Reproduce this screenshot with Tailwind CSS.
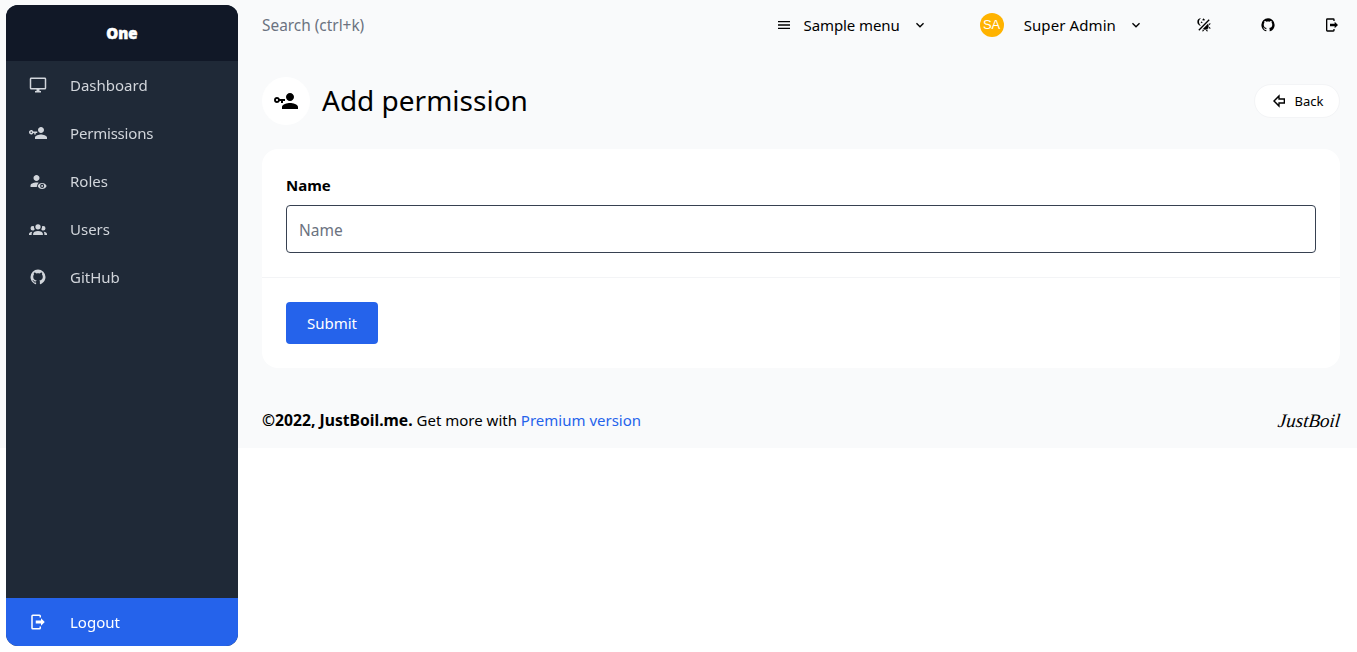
<!DOCTYPE html>
<html lang="en">
<head>
    <meta charset="UTF-8">
    <meta name="viewport" content="width=device-width, initial-scale=1.0">
    <title>Add permission</title>
    <script src="https://cdn.jsdelivr.net/npm/@tailwindcss/browser@4"></script>
</head>
<body class="bg-white min-h-screen font-['Noto_Sans',sans-serif] text-black">
    <!-- Sidebar -->
    <aside class="fixed left-[6px] top-[5px] bottom-[6px] w-[232px] bg-[#1f2937] rounded-xl overflow-hidden flex flex-col">
        <div class="h-14 shrink-0 bg-[#111827] flex items-center justify-center text-white font-black text-[15px] [-webkit-text-stroke:0.5px_white]">One</div>
        <nav class="flex-1 text-[#d1d5db] text-[15px]">
            <a href="#" class="h-12 flex items-center">
                <span class="w-16 flex justify-center"><svg class="w-[18px] h-[18px]" viewBox="0 0 24 24" fill="currentColor"><path d="M21,16H3V4H21M21,2H3C1.89,2 1,2.89 1,4V16A2,2 0 0,0 3,18H10V20H8V22H16V20H14V18H21A2,2 0 0,0 23,16V4C23,2.89 22.1,2 21,2Z"/></svg></span>
                <span>Dashboard</span>
            </a>
            <a href="#" class="h-12 flex items-center">
                <span class="w-16 flex justify-center"><svg class="w-[18px] h-[18px]" viewBox="0 0 24 24" fill="currentColor"><path d="M11 10V12H9V14H7V12H5.8C5.4 13.2 4.3 14 3 14C1.3 14 0 12.7 0 11S1.3 8 3 8C4.3 8 5.4 8.8 5.8 10H11M3 10C2.4 10 2 10.4 2 11S2.4 12 3 12 4 11.6 4 11 3.6 10 3 10M16 14C18.7 14 24 15.3 24 18V20H8V18C8 15.3 13.3 14 16 14M16 12C13.8 12 12 10.2 12 8S13.8 4 16 4 20 5.8 20 8 18.2 12 16 12Z"/></svg></span>
                <span class="tracking-[-0.2px]">Permissions</span>
            </a>
            <a href="#" class="h-12 flex items-center">
                <span class="w-16 flex justify-center"><svg class="w-[18px] h-[18px]" viewBox="0 0 24 24" fill="currentColor"><path d="M10 4C7.79 4 6 5.79 6 8S7.79 12 10 12 14 10.21 14 8 12.21 4 10 4M10 14C5.58 14 2 15.79 2 18V20H10.4C10.6 17.5 11.7 15.6 13.1 14.22 12.2 14.08 11.13 14 10 14Z"/><path fill-rule="evenodd" d="M17.5 14.5c-2.7 0-5 1.7-6 4 1 2.3 3.3 4 6 4s5-1.7 6-4c-1-2.3-3.3-4-6-4zm0 6.7a2.7 2.7 0 1 1 0-5.4 2.7 2.7 0 0 1 0 5.4zm0-4a1.3 1.3 0 1 0 0 2.6 1.3 1.3 0 0 0 0-2.6z"/></svg></span>
                <span>Roles</span>
            </a>
            <a href="#" class="h-12 flex items-center">
                <span class="w-16 flex justify-center"><svg class="w-[18px] h-[18px]" viewBox="0 0 24 24" fill="currentColor"><path d="M12,5.5A3.5,3.5 0 0,1 15.5,9A3.5,3.5 0 0,1 12,12.5A3.5,3.5 0 0,1 8.5,9A3.5,3.5 0 0,1 12,5.5M5,8C5.56,8 6.08,8.15 6.53,8.42C6.38,9.85 6.8,11.27 7.66,12.38C7.16,13.34 6.16,14 5,14A3,3 0 0,1 2,11A3,3 0 0,1 5,8M19,8A3,3 0 0,1 22,11A3,3 0 0,1 19,14C17.84,14 16.84,13.34 16.34,12.38C17.2,11.27 17.62,9.85 17.47,8.42C17.92,8.15 18.44,8 19,8M5.5,18.25C5.5,16.18 8.41,14.5 12,14.5C15.59,14.5 18.5,16.18 18.5,18.25V20H5.5V18.25M0,20V18.5C0,17.11 1.89,15.94 4.45,15.6C3.86,16.28 3.5,17.22 3.5,18.25V20H0M24,20H20.5V18.25C20.5,17.22 20.14,16.28 19.55,15.6C22.11,15.94 24,17.11 24,18.5V20Z"/></svg></span>
                <span>Users</span>
            </a>
            <a href="#" class="h-12 flex items-center">
                <span class="w-16 flex justify-center"><svg class="w-[18px] h-[18px]" viewBox="0 0 24 24" fill="currentColor"><path d="M12,2A10,10 0 0,0 2,12C2,16.42 4.87,20.17 8.84,21.5C9.34,21.58 9.5,21.27 9.5,21C9.5,20.77 9.5,20.14 9.5,19.31C6.73,19.91 6.14,17.97 6.14,17.97C5.68,16.81 5.03,16.5 5.03,16.5C4.12,15.88 5.1,15.9 5.1,15.9C6.1,15.97 6.63,16.93 6.63,16.93C7.5,18.45 8.97,18 9.54,17.76C9.63,17.11 9.89,16.67 10.17,16.42C7.95,16.17 5.62,15.31 5.62,11.5C5.62,10.39 6,9.5 6.65,8.79C6.55,8.54 6.2,7.5 6.75,6.15C6.75,6.15 7.59,5.88 9.5,7.17C10.29,6.95 11.15,6.84 12,6.84C12.85,6.84 13.71,6.95 14.5,7.17C16.41,5.88 17.25,6.15 17.25,6.15C17.8,7.5 17.45,8.54 17.35,8.79C18,9.5 18.38,10.39 18.38,11.5C18.38,15.32 16.04,16.16 13.81,16.41C14.17,16.72 14.5,17.33 14.5,18.26C14.5,19.6 14.5,20.68 14.5,21C14.5,21.27 14.66,21.59 15.17,21.5C19.14,20.16 22,16.42 22,12A10,10 0 0,0 12,2Z"/></svg></span>
                <span>GitHub</span>
            </a>
        </nav>
        <a href="#" class="h-12 shrink-0 flex items-center bg-[#2563eb] text-white text-[15px]">
            <span class="w-16 flex justify-center"><svg class="w-[18px] h-[18px]" viewBox="0 0 24 24" fill="currentColor"><path d="M16,17V14H9V10H16V7L21,12L16,17M14,2A2,2 0 0,1 16,4V6H14V4H5V20H14V18H16V20A2,2 0 0,1 14,22H5A2,2 0 0,1 3,20V4A2,2 0 0,1 5,2H14Z"/></svg></span>
            <span>Logout</span>
        </a>
    </aside>

    <!-- Main -->
    <div class="bg-[#f9fafb] pl-[238px] h-[448px] flex flex-col">
        <header class="h-[50px] flex items-center justify-between pl-6 pr-[17px]">
            <span class="text-[15.4px] text-[#6b7280] mt-0.5">Search (ctrl+k)</span>
            <div class="flex items-center text-[15px]">
                <svg class="w-4 h-4" viewBox="0 0 24 24" fill="currentColor"><path d="M3,6H21V8H3V6M3,11H21V13H3V11M3,16H21V18H3V16Z"/></svg>
                <span class="ml-3 tracking-[-0.1px]">Sample menu</span>
                <svg class="ml-3 w-4 h-4" viewBox="0 0 24 24" fill="currentColor"><path d="M7.41,8.58L12,13.17L16.59,8.58L18,10L12,16L6,10L7.41,8.58Z"/></svg>
                <span class="ml-[52px] w-6 h-6 rounded-full bg-[#ffb300] text-white text-[13px] font-['Liberation_Sans',sans-serif] flex items-center justify-center">SA</span>
                <span class="ml-5 tracking-[0.1px]">Super Admin</span>
                <svg class="ml-3 w-4 h-4" viewBox="0 0 24 24" fill="currentColor"><path d="M7.41,8.58L12,13.17L16.59,8.58L18,10L12,16L6,10L7.41,8.58Z"/></svg>
                <svg class="ml-[52px] w-4 h-4" viewBox="0 0 24 24" fill="currentColor"><path d="M7.5,2C5.71,3.15 4.5,5.18 4.5,7.5C4.5,9.82 5.71,11.85 7.53,13C4.46,13 2,10.54 2,7.5A5.5,5.5 0 0,1 7.5,2M19.07,3.5L20.5,4.93L4.93,20.5L3.5,19.07L19.07,3.5M12.89,5.93L11.41,5L9.97,6L10.39,4.3L9,3.24L10.75,3.12L11.33,1.47L12,3.1L13.73,3.13L12.38,4.26L12.89,5.93M9.59,9.54L8.43,8.81L7.31,9.59L7.65,8.27L6.56,7.44L7.92,7.35L8.37,6.06L8.88,7.33L10.24,7.35L9.19,8.23L9.59,9.54M19,13.5A5.5,5.5 0 0,1 13.5,19C12.28,19 11.15,18.6 10.24,17.93L17.93,10.24C18.6,11.15 19,12.28 19,13.5M14.6,20.08L17.37,18.93L17.13,22.28L14.6,20.08M18.93,17.38L20.08,14.61L22.28,17.15L18.93,17.38M20.08,12.42L18.94,9.64L22.28,9.88L20.08,12.42M9.63,18.93L12.4,20.08L9.87,22.27L9.63,18.93Z"/></svg>
                <svg class="ml-12 w-4 h-4" viewBox="0 0 24 24" fill="currentColor"><path d="M12,2A10,10 0 0,0 2,12C2,16.42 4.87,20.17 8.84,21.5C9.34,21.58 9.5,21.27 9.5,21C9.5,20.77 9.5,20.14 9.5,19.31C6.73,19.91 6.14,17.97 6.14,17.97C5.68,16.81 5.03,16.5 5.03,16.5C4.12,15.88 5.1,15.9 5.1,15.9C6.1,15.97 6.63,16.93 6.63,16.93C7.5,18.45 8.97,18 9.54,17.76C9.63,17.11 9.89,16.67 10.17,16.42C7.95,16.17 5.62,15.31 5.62,11.5C5.62,10.39 6,9.5 6.65,8.79C6.55,8.54 6.2,7.5 6.75,6.15C6.75,6.15 7.59,5.88 9.5,7.17C10.29,6.95 11.15,6.84 12,6.84C12.85,6.84 13.71,6.95 14.5,7.17C16.41,5.88 17.25,6.15 17.25,6.15C17.8,7.5 17.45,8.54 17.35,8.79C18,9.5 18.38,10.39 18.38,11.5C18.38,15.32 16.04,16.16 13.81,16.41C14.17,16.72 14.5,17.33 14.5,18.26C14.5,19.6 14.5,20.68 14.5,21C14.5,21.27 14.66,21.59 15.17,21.5C19.14,20.16 22,16.42 22,12A10,10 0 0,0 12,2Z"/></svg>
                <svg class="ml-12 w-4 h-4" viewBox="0 0 24 24" fill="currentColor"><path d="M16,17V14H9V10H16V7L21,12L16,17M14,2A2,2 0 0,1 16,4V6H14V4H5V20H14V18H16V20A2,2 0 0,1 14,22H5A2,2 0 0,1 3,20V4A2,2 0 0,1 5,2H14Z"/></svg>
            </div>
        </header>

        <main class="pl-6 pr-[17px] pt-[27px]">
            <div class="flex items-center justify-between mb-6">
                <div class="flex items-center">
                    <span class="w-12 h-12 rounded-full bg-white flex items-center justify-center"><svg class="w-6 h-6" viewBox="0 0 24 24" fill="currentColor"><path d="M11 10V12H9V14H7V12H5.8C5.4 13.2 4.3 14 3 14C1.3 14 0 12.7 0 11S1.3 8 3 8C4.3 8 5.4 8.8 5.8 10H11M3 10C2.4 10 2 10.4 2 11S2.4 12 3 12 4 11.6 4 11 3.6 10 3 10M16 14C18.7 14 24 15.3 24 18V20H8V18C8 15.3 13.3 14 16 14M16 12C13.8 12 12 10.2 12 8S13.8 4 16 4 20 5.8 20 8 18.2 12 16 12Z"/></svg></span>
                    <h1 class="ml-3 -mt-[3px] text-[28px] leading-9">Add permission</h1>
                </div>
                <a href="#" class="h-[34px] w-[86px] rounded-full bg-white flex items-center justify-center border border-[#f3f4f6] text-[13px]">
                    <svg class="w-4 h-4 mr-2" viewBox="0 0 24 24" fill="currentColor"><path d="M13,22L3,12L13,2V8H21V16H13V22M6,12L11,17V14H19V10H11V7L6,12Z"/></svg>
                    <span class="mt-px">Back</span>
                </a>
            </div>

            <form class="bg-white rounded-2xl">
                <div class="p-6">
                    <label class="block font-bold text-[15px] leading-6 mb-2">Name</label>
                    <input type="text" placeholder="Name" class="w-full h-12 px-3 pt-0.5 border border-[#374151] rounded bg-white text-[15.5px] placeholder:text-[#6b7280]">
                </div>
                <div class="border-t border-[#f3f4f6] p-6">
                    <button type="button" class="h-[42px] w-[92px] bg-[#2563eb] text-white rounded text-[15px]">Submit</button>
                </div>
            </form>

            <footer class="mt-[41px] flex items-center justify-between text-[15px]">
                <p><b class="text-[15.7px]">©2022, JustBoil.me.</b> Get more with <a href="#" class="text-[#2563eb]">Premium version</a></p>
                <span class="font-['Liberation_Serif',serif] italic text-[19px] leading-6 -skew-x-6">JustBoil</span>
            </footer>
        </main>
    </div>
</body>
</html>
